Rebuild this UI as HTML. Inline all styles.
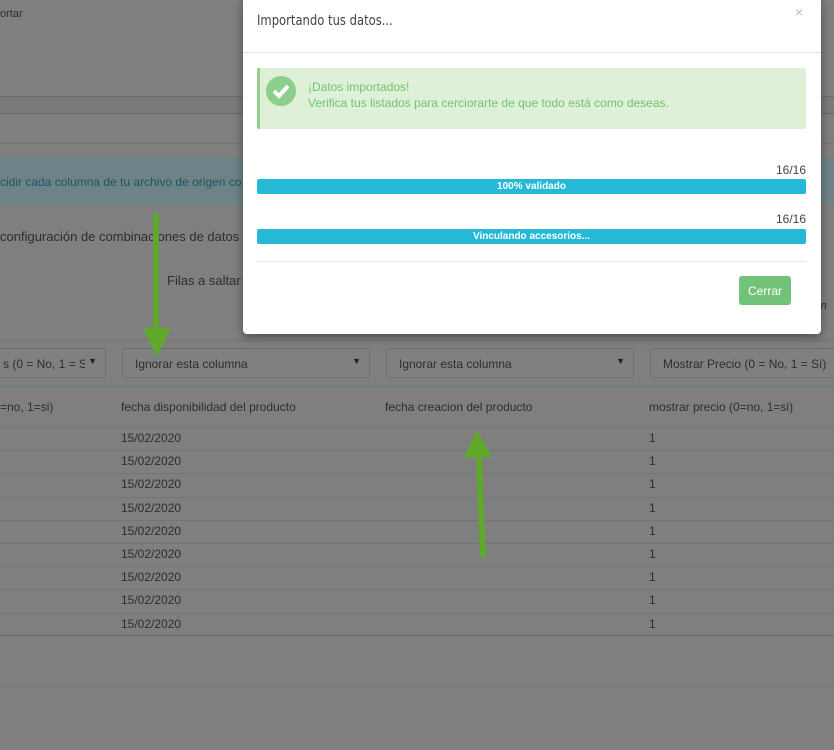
<!DOCTYPE html>
<html><head><meta charset="utf-8"><style>
body{margin:0;width:834px;height:750px;overflow:hidden;background:#7f7f7f;font-family:"Liberation Sans",sans-serif;position:relative;color:#333}
.a{position:absolute}
.sel{position:absolute;top:348px;height:30px;border:1px solid #6e6e6e;border-radius:3px;background:#808080;font-size:12px;color:#2e2e2e;line-height:31px;box-sizing:border-box;padding-left:12px;white-space:nowrap;overflow:hidden}
.sel:after{content:"▼";position:absolute;right:8px;top:-3px;font-size:9px;color:#222;background:#808080;padding-left:3px}
.t{position:absolute;font-size:12px;color:#2e2e2e;white-space:nowrap}
.hl{position:absolute;left:0;width:834px;height:1px;background:#747474}
.bar{position:absolute;left:257px;width:549px;height:15px;background:#25b9d7;border-radius:2px;color:#fff;font-size:10px;text-align:center;line-height:15px;font-weight:bold}
</style></head><body>
<div class="t" style="left:0;top:8px;font-size:11px">ortar</div>
<div class="a" style="left:0;top:96px;width:834px;height:16px;background:#7a7a7a;border-top:1px solid #6a6a6a;border-bottom:1px solid #6a6a6a"></div>
<div class="hl" style="top:143px"></div>
<div class="a" style="left:0;top:158px;width:834px;height:46px;background:#6e8388"></div>
<div class="t" style="left:0;top:175px;color:#1e5565;font-size:12px">cidir cada columna de tu archivo de origen co</div>
<div class="t" style="left:0;top:229px;font-size:13px">configuración de combinaciones de datos</div>
<div class="t" style="left:167px;top:273px;font-size:13px">Filas a saltar</div>
<div class="hl" style="top:340px"></div>
<div class="t" style="left:812px;top:300px;font-size:11px;font-style:italic">, in</div>
<div class="sel" style="left:-10px;width:116px">s (0 = No, 1 = Si)</div>
<div class="sel" style="left:122px;width:248px">Ignorar esta columna</div>
<div class="sel" style="left:386px;width:248px">Ignorar esta columna</div>
<div class="sel" style="left:650px;width:200px">Mostrar Precio (0 = No, 1 = Sí)</div>
<div class="a" style="left:0;top:386px;width:834px;height:1px;background:#5e7f88"></div>
<div class="t" style="left:0;top:400px">=no, 1=si)</div>
<div class="t" style="left:121px;top:400px">fecha disponibilidad del producto</div>
<div class="t" style="left:385px;top:400px">fecha creacion del producto</div>
<div class="t" style="left:649px;top:400px">mostrar precio (0=no, 1=si)</div>
<div id="rows"></div>
<div class="hl" style="top:635px;background:#6c6c6c"></div>
<div class="hl" style="top:686px"></div>
<script>
var h='';for(var i=0;i<9;i++){var y=427+i*23.2;h+='<div class="hl" style="top:'+Math.round(y)+'px"></div><div class="t" style="left:121px;top:'+Math.round(y+4)+'px">15/02/2020</div><div class="t" style="left:649px;top:'+Math.round(y+4)+'px">1</div>';}
document.getElementById('rows').innerHTML=h;
</script>
<svg class="a" style="left:0;top:0" width="834" height="750">
<line x1="156" y1="216" x2="156" y2="330" stroke="#5fa82a" stroke-width="6" stroke-linecap="round"/>
<polygon points="143,328 171,328 157,357" fill="#5fa82a"/>
<line x1="483" y1="555" x2="479" y2="460" stroke="#5fa82a" stroke-width="6" stroke-linecap="round"/>
<polygon points="464,458 492,457 477,430" fill="#5fa82a"/>
</svg>
<div class="a" style="left:243px;top:-4px;width:578px;height:338px;background:#fff;border-radius:4px;box-shadow:0 3px 10px rgba(0,0,0,.4)">
<div class="a" style="left:14px;top:17px;font-size:14px;color:#444;font-family:'DejaVu Sans Condensed','Liberation Sans Narrow',sans-serif;transform:scaleX(.92);transform-origin:left">Importando tus datos...</div>
<div class="a" style="left:552px;top:8px;font-size:14px;color:#bbb">×</div>
<div class="a" style="left:0;top:56px;width:578px;height:1px;background:#e5e5e5"></div>
<div class="a" style="left:14px;top:72px;width:549px;height:61px;background:#dff0d8;border-left:3px solid #92d08d;box-sizing:border-box;border-radius:2px">
<svg class="a" style="left:6px;top:8px" width="30" height="30"><circle cx="15" cy="15" r="15" fill="#8ccf8a"/><path d="M8 15 L13 20 L22 10" stroke="#fff" stroke-width="4" fill="none"/></svg>
<div class="a" style="left:48px;top:11px;font-size:12px;color:#71c471;line-height:16px">¡Datos importados!<br>Verifica tus listados para cerciorarte de que todo está como deseas.</div>
</div>
<div class="a" style="right:15px;top:167px;font-size:12px;color:#444">16/16</div>
<div class="a" style="right:15px;top:216px;font-size:12px;color:#444">16/16</div>
<div class="a" style="left:14px;top:265px;width:549px;height:1px;background:#e5e5e5"></div>
<div class="a" style="left:496px;top:280px;width:52px;height:29px;background:#72c279;border-radius:3px;color:#fff;font-size:12px;text-align:center;line-height:31px">Cerrar</div>
</div>
<div class="bar" style="top:179px">100% validado</div>
<div class="bar" style="top:229px">Vinculando accesorios...</div>
</body></html>
